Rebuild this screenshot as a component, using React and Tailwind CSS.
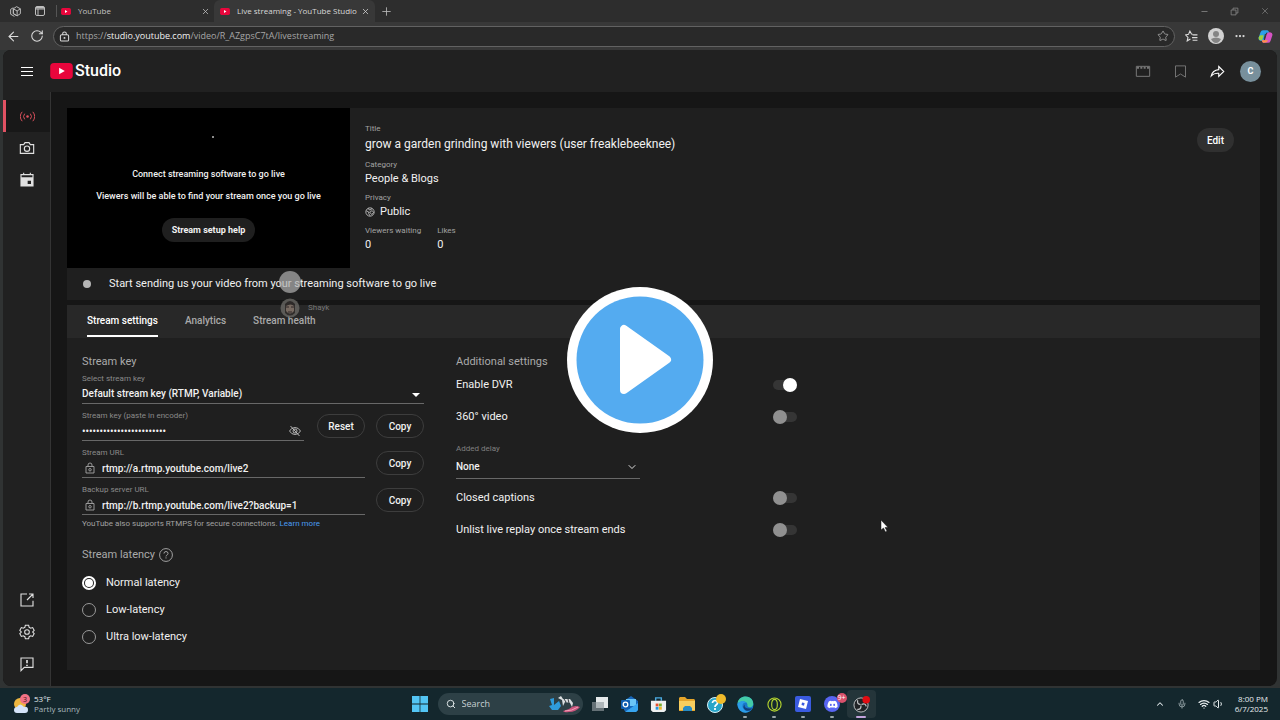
import { useState } from 'react'
import clsx from 'clsx'
import { FaDiscord } from 'react-icons/fa'
import {
  ArrowLeft,
  ChevronDown,
  ChevronUp,
  Ellipsis,
  Mic,
  Minus,
  Plus,
  RotateCw,
  Search,
  Star,
  Volume1,
  Wifi,
  X,
} from 'lucide-react'

function Icon({ children, className = 'size-4', box = 24, width = 1.5 }) {
  return (
    <svg
      viewBox={`0 0 ${box} ${box}`}
      className={className}
      fill="none"
      stroke="currentColor"
      strokeWidth={width}
      aria-hidden="true"
    >
      {children}
    </svg>
  )
}

function YouTubeMark({ className }) {
  return (
    <svg viewBox="0 0 24 17" className={className} aria-hidden="true">
      <rect width="24" height="17" rx="4" fill="#e8063c" />
      <path d="M9.5 5v7l6-3.500z" fill="#fff" />
    </svg>
  )
}

function Tab({ title, active, className }) {
  return (
    <div
      className={clsx(
        'flex h-[22px] items-center rounded-t-md',
        active ? 'bg-[#383838] text-[#d8d8d8]' : 'text-[#c4c4c4]',
        className
      )}
    >
      <YouTubeMark className="h-[7px] w-[10px] shrink-0" />
      <span className="ml-[7px] flex-1 whitespace-nowrap text-[8px]">{title}</span>
      <button aria-label={`Close ${title}`} className="p-1">
        <X className="size-[9px]" strokeWidth={2} />
      </button>
    </div>
  )
}

function BrowserBar() {
  return (
    <div className="font-['Open_Sans','Noto_Sans',sans-serif]">
      <div className="flex h-[22px] items-center bg-[#2d2d2d] text-[#bdbdbd]">
        <button aria-label="Workspaces" className="ml-[9px]">
          <Icon className="size-[13px]" width={1.8}>
            <path d="M8 7l6-4 7 4v9l-6 4M8 7l7 4v9l-7-4zM8 7v9l7 4M15 11l6-4M8 5L3 8v9l7 4" />
          </Icon>
        </button>
        <button aria-label="Tab actions" className="ml-3">
          <Icon className="size-[12px]" width={2}>
            <rect x="3" y="3" width="18" height="18" rx="3" />
            <path d="M3 8h18M8 8v13" />
            <path d="M4 5.500h16" strokeWidth="3" />
          </Icon>
        </button>
        <div className="ml-[10px] h-3 w-px bg-[#555]" />
        <Tab title="YouTube" className="w-[157px] pl-[4px]" />
        <Tab title="Live streaming - YouTube Studio" active className="w-[161px] pl-[6px] pr-[2px]" />
        <button aria-label="New tab" className="ml-[5px]">
          <Plus className="size-[13px]" strokeWidth={1.5} />
        </button>
        <div className="ml-auto flex items-center gap-[21px] pr-[10px] text-[#8d8d8d]">
          <button aria-label="Minimize"><Minus className="size-[9px]" /></button>
          <button aria-label="Restore">
            <Icon className="size-[9px]" width={2}>
              <path d="M3 8h13v13H3zM8 8V3h13v13h-5" />
            </Icon>
          </button>
          <button aria-label="Close window"><X className="size-[10px]" strokeWidth={1.5} /></button>
        </div>
      </div>

      <div className="flex h-7 items-center bg-[#383838] pl-[6px] pr-[7px] text-[#dcdcdc]">
        <button aria-label="Back"><ArrowLeft className="size-[15px]" strokeWidth={1.7} /></button>
        <button aria-label="Refresh" className="ml-[9px]">
          <RotateCw className="size-[14px]" strokeWidth={1.8} />
        </button>
        <div className="ml-[9px] flex h-[21px] flex-1 items-center rounded-full border border-[#626262] bg-[#292929] pl-[5px] pr-[5px]">
          <Icon className="size-[11px]" width={2.2}>
            <rect x="3" y="8" width="18" height="14" rx="3" />
            <path d="M8 8V6a4 4 0 018 0v2" />
            <circle cx="12" cy="15" r="1" />
          </Icon>
          <span className="ml-[6px] flex-1 text-[9px] text-[#a6a6a6]">
            https://<span className="text-[#f0f0f0]">studio.youtube.com</span>/video/R_AZgpsC7tA/livestreaming
          </span>
          <button aria-label="Add to favorites">
            <Star className="size-3 text-[#a8a8a8]" strokeWidth={1.6} />
          </button>
        </div>
        <button aria-label="Favorites" className="ml-[10px]">
          <Icon className="size-[13px]" width={2}>
            <path d="M14 8l-2-.500L9 2 6.500 8 1 9l4.500 4.500L4 20l6-3.500M14 9h9M13 14h10M14 19h9" />
          </Icon>
        </button>
        <button aria-label="Profile" className="ml-[10px]">
          <svg viewBox="0 0 16 16" className="size-4" aria-hidden="true">
            <circle cx="8" cy="8" r="8" fill="#d2d2d2" />
            <circle cx="8" cy="6" r="3" fill="#858585" />
            <path d="M3 11q5-3 10 0-2 4-5 4t-5-4z" fill="#858585" />
          </svg>
        </button>
        <button aria-label="Browser menu" className="ml-[10px]">
          <Ellipsis className="size-3" strokeWidth={2.5} />
        </button>
        <button aria-label="Copilot" className="ml-3">
          <svg viewBox="0 0 24 24" className="size-[15px]" aria-hidden="true">
            <path d="M8 2h7q2 0 3 4H13l-3 10q-1 3-4 3-6 0-5-5L4 5q1-3 4-3z" fill="#2b9fe8" />
            <path d="M1 14q1-4 3-4h5L7 17q-6 3-6-3z" fill="#9dcf3e" />
            <path d="M16 22H9q-2 0-3-4h5l3-10q1-3 4-3 6 0 5 5l-3 9q-1 3-4 3z" fill="#d653c4" />
            <path d="M9 22q-2 0-3-4h10q-1 4-7 4z" fill="#ff9349" />
            <path d="M11 8h2l-2 8h-2z" fill="#383838" />
          </svg>
        </button>
      </div>
    </div>
  )
}

function StudioHeader() {
  return (
    <header className="flex h-[42px] items-center bg-[#212121] pl-[17px] pr-4 text-white">
      <button aria-label="Menu">
        <svg viewBox="0 0 14 11" className="h-[11px] w-[14px] stroke-white" aria-hidden="true">
          <path d="M1 1.500h12M1 5.500h12M1 9.500h12" />
        </svg>
      </button>
      <a href="#" className="ml-4 flex items-center gap-[2px]">
        <YouTubeMark className="h-4 w-[23px]" />
        <span className="text-[16px] font-medium leading-5">Studio</span>
      </a>
      <div className="ml-auto flex items-center">
        <button aria-label="Create highlight" className="text-[#777]">
          <Icon className="size-4" width={1.5}>
            <path d="M2 5h20v15H2z" />
            <path d="M3 7h18" strokeDasharray="3 2" strokeWidth="3" />
          </Icon>
        </button>
        <button aria-label="Insert marker" className="ml-[22px] text-[#777]">
          <Icon className="size-[15px]"><path d="M4 3h16v18l-8-5-8 5z" /></Icon>
        </button>
        <button aria-label="Share" className="ml-[22px]">
          <Icon className="size-[15px]" width={1.8}>
            <path d="M14 4l8 8-8 8v-5Q7 14 2 19 4 10 14 9z" />
          </Icon>
        </button>
        <button
          aria-label="Account"
          className="ml-[15px] size-[21px] rounded-full bg-[#78909c] text-[9px] font-bold leading-none"
        >
          C
        </button>
      </div>
    </header>
  )
}

function SideItem({ label, active, children }) {
  return (
    <a
      href="#"
      aria-label={label}
      className={clsx(
        'flex h-8 items-center justify-center border-l-3 pr-[2px]',
        active ? 'border-[#e05263] bg-[#181818] text-[#e0525e]' : 'border-transparent text-[#e0e0e0]'
      )}
    >
      {children}
    </a>
  )
}

function Sidebar() {
  return (
    <nav className="flex w-12 shrink-0 flex-col border-r border-[#343434] bg-[#212121] pb-[6px] pt-2">
      <SideItem label="Stream" active>
        <Icon className="size-[15px]" width={1.5}>
          <circle cx="12" cy="12" r="2" fill="currentColor" stroke="none" />
          <path d="M7.500 7.500a7 7 0 000 9M16.500 7.500a7 7 0 010 9M3.500 4.500a11 11 0 000 15M20.500 4.500a11 11 0 010 15" />
        </Icon>
      </SideItem>
      <SideItem label="Webcam">
        <Icon className="size-4" width={1.7}>
          <path d="M2 7h5l2-3h6l2 3h5v13H2z" />
          <circle cx="12" cy="13" r="4" />
        </Icon>
      </SideItem>
      <SideItem label="Manage">
        <Icon className="size-4" width={1.7}>
          <path d="M3 4h18v17H3zM7 1v3M17 1v3" />
          <path d="M3 8h18v13H3zM13 13v5h5v-5z" fill="currentColor" fillRule="evenodd" stroke="none" />
        </Icon>
      </SideItem>
      <div className="flex-1" />
      <SideItem label="YouTube Studio">
        <Icon className="size-4" width={1.7}>
          <path d="M12 3H3v18h18v-8M15 3h6v6M21 3l-9 9" />
        </Icon>
      </SideItem>
      <SideItem label="Settings">
        <Icon className="size-4" width={1.6}>
          <path d="M9.500 2h5l.700 3 2.300 1.300 3-.900 2.300 4.200-2.300 2.400 2.300 2.400-2.300 4.200-3-.900-2.300 1.300-.700 3h-5l-.700-3-2.300-1.300-3 .900-2.300-4.200L3.500 12 1.200 9.600l2.300-4.200 3 .900L8.800 5z" />
          <circle cx="12" cy="12" r="3.500" />
        </Icon>
      </SideItem>
      <SideItem label="Send feedback">
        <Icon className="size-4" width={1.7}>
          <path d="M3 3h18v14H8l-5 5z" />
          <path d="M12 6v5M12 13v2" strokeWidth="2.500" />
        </Icon>
      </SideItem>
    </nav>
  )
}

function Detail({ label, children, large }) {
  return (
    <div>
      <dt className="text-[8px] leading-3 text-[#a2a2a2]">{label}</dt>
      <dd className={clsx('flex items-center pt-px text-[#f1f1f1]', large ? 'text-[12px] leading-4' : 'text-[11px] leading-[13px]')}>
        {children}
      </dd>
    </div>
  )
}

function StreamCard() {
  return (
    <section className="bg-[#1f1f1f]">
      <div className="flex">
        <div className="flex h-40 w-[283px] shrink-0 flex-col items-center bg-black text-[9px] font-medium leading-[22px] text-[#f1f1f1]">
          <div className="ml-[9px] mt-7 size-[2px] rounded-full bg-[#bbb]" />
          <p className="mt-[25px]">Connect streaming software to go live</p>
          <p>Viewers will be able to find your stream once you go live</p>
          <button className="mt-[11px] h-6 rounded-full bg-[#1f1f1f] px-[10px] text-[9px] font-bold leading-6">
            Stream setup help
          </button>
        </div>
        <dl className="flex flex-1 flex-col gap-[7px] pl-[15px] pt-[15px]">
          <Detail label="Title" large>grow a garden grinding with viewers (user freaklebeeknee)</Detail>
          <Detail label="Category">People &amp; Blogs</Detail>
          <Detail label="Privacy">
            <Icon className="mr-[5px] size-[10px] text-[#c8c8c8]" width={2}>
              <circle cx="12" cy="12" r="10" />
              <path d="M3 9l6 3v4l3 5M8 3l2 4 5-1 1-3M14 10l-3 2 5 6 5-5-4-4z" />
            </Icon>
            Public
          </Detail>
          <div className="flex gap-4">
            <Detail label="Viewers waiting">0</Detail>
            <Detail label="Likes">0</Detail>
          </div>
        </dl>
        <button className="mr-[26px] mt-5 h-6 rounded-full bg-[#303030] px-[10px] text-[10px] font-medium text-white">
          Edit
        </button>
      </div>
      <div className="flex h-8 items-center pl-4 text-[11px] text-[#f1f1f1]">
        <span className="mr-[18px] size-2 rounded-full bg-[#b5b5b5]" />
        <p className="pt-px">Start sending us your video from your streaming software to go live</p>
      </div>
    </section>
  )
}

function Field({ id, label, children, className }) {
  return (
    <div className={clsx('pt-[6px]', className)}>
      <label htmlFor={id} className="block text-[8px] leading-3 text-[#8a8a8a]">{label}</label>
      <div className="flex h-[19px] items-center border-b border-[#686868] text-[#f1f1f1]">{children}</div>
    </div>
  )
}

function PillButton({ children }) {
  return (
    <button className="mb-[3px] h-6 w-12 shrink-0 rounded-full border border-[#3d3d3d] text-[10px] font-medium text-[#f1f1f1]">
      {children}
    </button>
  )
}

function LockIcon() {
  return (
    <Icon className="ml-[2px] mr-[6px] size-3 shrink-0 text-[#a5a5a5]" width={1.8}>
      <path d="M4 9h16v13H4zM8 9V6a4 4 0 018 0v3" />
      <circle cx="12" cy="15.500" r="2.500" />
    </Icon>
  )
}

function Toggle({ id, label, on }) {
  const [checked, setChecked] = useState(Boolean(on))
  return (
    <div className="flex h-8 items-center justify-between pr-px text-[11px] text-[#f1f1f1]">
      <label htmlFor={id} className="pt-px">{label}</label>
      <input
        id={id}
        type="checkbox"
        checked={checked}
        onChange={(e) => setChecked(e.target.checked)}
        className="flex h-[10px] w-6 appearance-none items-center rounded-full bg-[#353535] before:size-[14px] before:shrink-0 before:rounded-full before:bg-[#909090] checked:justify-end checked:before:bg-white"
      />
    </div>
  )
}

const latencies = ['Normal latency', 'Low-latency', 'Ultra low-latency']

function StreamSettings() {
  const [latency, setLatency] = useState(latencies[0])

  return (
    <div className="flex flex-1 gap-8 bg-[#1f1f1f] px-[15px] pt-4">
      <div className="w-[342px]">
        <h2 className="pt-px text-[11px] leading-[13px] text-[#aaa]">Stream key</h2>
        <Field id="key-select" label="Select stream key" className="-mt-px">
          <div className="relative flex flex-1 items-center">
            <select id="key-select" className="w-full appearance-none bg-transparent text-[10px] font-medium leading-4">
              <option>Default stream key (RTMP, Variable)</option>
            </select>
            <svg viewBox="0 0 8 4" className="pointer-events-none absolute right-1 top-[7px] h-1 w-[8px] fill-white">
              <path d="M0 0h8L4 4z" />
            </svg>
          </div>
        </Field>
        <div className="flex items-end gap-[11px]">
          <Field id="key" label="Stream key (paste in encoder)" className="mr-[2px] flex-1">
            <input
              id="key"
              type="password"
              readOnly
              value="abcdefghijklmnopqrstuvwx"
              className="w-0 flex-1 bg-transparent text-[10px] font-medium outline-none"
            />
            <button aria-label="Show key">
              <Icon className="mr-[3px] size-3 text-[#c4c4c4]" width={1.8}>
                <path d="M1 12Q5 5 12 5t11 7q-4 7-11 7T1 12zM3 2l18 20" />
                <circle cx="12" cy="12" r="4" />
              </Icon>
            </button>
          </Field>
          <PillButton>Reset</PillButton>
          <PillButton>Copy</PillButton>
        </div>
        <div className="flex items-end gap-[11px]">
          <Field id="url" label="Stream URL" className="flex-1">
            <LockIcon />
            <input id="url" readOnly value="rtmp://a.rtmp.youtube.com/live2" className="w-0 flex-1 bg-transparent text-[10px] font-medium outline-none" />
          </Field>
          <PillButton>Copy</PillButton>
        </div>
        <div className="flex items-end gap-[11px]">
          <Field id="backup" label="Backup server URL" className="flex-1">
            <LockIcon />
            <input id="backup" readOnly value="rtmp://b.rtmp.youtube.com/live2?backup=1" className="w-0 flex-1 bg-transparent text-[10px] font-medium outline-none" />
          </Field>
          <PillButton>Copy</PillButton>
        </div>
        <p className="mt-[3px] text-[8px] leading-3 text-[#a2a2a2]">
          YouTube also supports RTMPS for secure connections.{' '}
          <a href="#" className="text-[#4a9cf0]">Learn more</a>
        </p>

        <fieldset className="mt-[17px]">
          <legend className="flex h-4 items-center gap-1 text-[11px] text-[#aaa]">
            Stream latency
            <Icon className="size-[14px]" width={1.6}>
              <circle cx="12" cy="12" r="11" />
              <path d="M8.500 9.500a3.500 3.500 0 117 0c0 2.500-3.500 2.500-3.500 5M12 16v2" />
            </Icon>
          </legend>
          <div className="mt-[6px]">
            {latencies.map((name) => (
              <label key={name} className="flex h-[27px] items-center gap-[10px] text-[11px] text-[#f1f1f1]">
                <input
                  type="radio"
                  name="latency"
                  checked={latency === name}
                  onChange={() => setLatency(name)}
                  className="flex size-[14px] appearance-none items-center justify-center rounded-full border border-[#999] checked:border-2 checked:border-white checked:before:size-[8px] checked:before:rounded-full checked:before:bg-white"
                />
                <span className="pt-[2px]">{name}</span>
              </label>
            ))}
          </div>
        </fieldset>
      </div>

      <div className="w-[342px]">
        <h2 className="mb-px pt-px text-[11px] leading-[13px] text-[#aaa]">Additional settings</h2>
        <Toggle id="dvr" label="Enable DVR" on />
        <Toggle id="v360" label="360° video" />
        <div className="mb-[3px] mt-[10px] w-[184px]">
          <label htmlFor="delay" className="block text-[8px] leading-3 text-[#808080]">Added delay</label>
          <div className="relative flex h-6 items-center border-b border-[#686868] text-[#f1f1f1]">
            <select id="delay" className="w-full appearance-none bg-transparent text-[10px] font-medium">
              <option>None</option>
            </select>
            <ChevronDown className="pointer-events-none absolute right-[2px] size-3" strokeWidth={1.8} />
          </div>
        </div>
        <Toggle id="captions" label="Closed captions" />
        <Toggle id="unlist" label="Unlist live replay once stream ends" />
      </div>
    </div>
  )
}

function SettingsTabs() {
  const [tab, setTab] = useState('Stream settings')
  return (
    <div role="tablist" className="flex h-[33px] gap-[27px] bg-[#282828] pl-5 text-[10px]">
      {['Stream settings', 'Analytics', 'Stream health'].map((name) => (
        <button
          key={name}
          role="tab"
          aria-selected={tab === name}
          onClick={() => setTab(name)}
          className={clsx(
            'h-8 border-b-2 pt-px font-medium',
            tab === name ? 'border-white text-white' : 'border-transparent text-[#aaa]'
          )}
        >
          {name}
        </button>
      ))}
    </div>
  )
}

function TaskButton({ label, open, active, children }) {
  return (
    <button
      aria-label={label}
      className={clsx('relative flex h-7 w-[29px] items-center justify-center rounded', active && 'bg-[#24353a]')}
    >
      {children}
      {open && (
        <span className={clsx('absolute bottom-0 h-[2px] rounded-full', active ? 'w-[10px] bg-[#c3a3dc]' : 'w-1 bg-[#98a5a9]')} />
      )}
    </button>
  )
}

function Taskbar() {
  return (
    <footer className="flex h-8 items-center bg-[#14272d] font-['Open_Sans','Noto_Sans',sans-serif] text-[9px] text-[#e6ecee]">
      <div className="flex flex-1 items-center pl-[13px] leading-[10px]">
        <svg viewBox="0 0 18 20" className="mr-[3px] h-5 w-[18px]" aria-hidden="true">
          <circle cx="7" cy="10" r="6" fill="#eeb640" />
          <path d="M4 19a3 3 0 010-6q3-5 7 0 4-1 4 3 0 3-3 3z" fill="#d5e4fa" />
          <circle cx="12" cy="5" r="5" fill="#f17286" />
          <text x="12" y="8" textAnchor="middle" fontSize="7" fill="#42121a">3</text>
        </svg>
        <div className="text-[8px]">
          <div>53°F</div>
          <div className="text-[#a9b8bc]">Partly sunny</div>
        </div>
      </div>

      <div className="flex items-center">
        <TaskButton label="Start">
          <svg viewBox="0 0 16 16" className="size-4" aria-hidden="true">
            <path d="M0 0h7.600v7.600H0zM8.400 0H16v7.600H8.400zM0 8.400h7.600V16H0zM8.400 8.400H16V16H8.400z" fill="#53c5f4" />
          </svg>
        </TaskButton>
        <label className="mx-[3px] flex h-[22px] w-[145px] items-center rounded-full bg-[#2d4046] pl-2 pr-[2px]">
          <Search className="size-[10px] shrink-0" strokeWidth={2.2} />
          <input
            type="search"
            aria-label="Search"
            placeholder="Search"
            className="ml-[6px] w-0 flex-1 bg-transparent text-[9px] outline-none placeholder:text-[#c7d0d3]"
          />
          <svg viewBox="0 0 34 18" className="h-[18px] w-[34px]" aria-hidden="true">
            <path d="M3 4l4-1v7l5-4 2 5-3 4H5l-3-4 3-1z" fill="#2f9bdb" />
            <path d="M11 3l3-2 2 3h7l3 4-1 4-2-4-5-1-2 4-1-6z" fill="#dce0e2" />
            <path d="M17 4l2 3M21 4l1 4" stroke="#343b40" />
            <path d="M22 14q5-5 11-2-4 5-11 5-5 1-6-1z" fill="#c9547d" />
            <path d="M18 16q7 0 13-4" stroke="#f3a2b8" fill="none" />
          </svg>
        </label>
        <TaskButton label="Task view">
          <svg viewBox="0 0 18 16" className="h-4 w-[18px]" aria-hidden="true">
            <path d="M1 6h12v9H1z" fill="#657176" />
            <path d="M5 1h12v11H5z" fill="#e5e9ea" />
            <path d="M5 6h8v6H5z" fill="#aeb6b9" />
          </svg>
        </TaskButton>
        <TaskButton label="Outlook">
          <svg viewBox="0 0 18 16" className="h-4 w-[18px]" aria-hidden="true">
            <path d="M4 5l7-5 7 5v9l-2 2H6l-2-2z" fill="#1766ba" />
            <path d="M6 3h10v7H6z" fill="#6ac5f7" />
            <path d="M18 7v7l-2 2H5z" fill="#38a5ef" />
            <rect x="1" y="4" width="9" height="9" rx="1" fill="#0f5db0" />
            <circle cx="5.500" cy="8.500" r="2.300" fill="none" stroke="#fff" strokeWidth="1.300" />
          </svg>
        </TaskButton>
        <TaskButton label="Microsoft Store">
          <svg viewBox="0 0 18 18" className="size-[17px]" aria-hidden="true">
            <path d="M6 5V2h6v3" fill="none" stroke="#4aaae0" strokeWidth="1.500" />
            <path d="M1 5h16v10l-2 2H3l-2-2z" fill="#eef0f0" />
            <path d="M6 8h3v3H6z" fill="#e5502e" />
            <path d="M9.500 8h3v3h-3z" fill="#78ae2d" />
            <path d="M6 11.500h3v3H6z" fill="#2498df" />
            <path d="M9.500 11.500h3v3h-3z" fill="#edb52a" />
          </svg>
        </TaskButton>
        <TaskButton label="File Explorer">
          <svg viewBox="0 0 18 16" className="h-4 w-[18px]" aria-hidden="true">
            <path d="M1 2l1-1h5l2 2h7l1 1v11H1z" fill="#e5a52b" />
            <path d="M1 5h16v9H1z" fill="#f7ce5e" />
            <path d="M5 15v-3l2-2h5l2 2v3z" fill="#278bc4" />
          </svg>
        </TaskButton>
        <TaskButton label="Get Help">
          <svg viewBox="0 0 20 20" className="size-5" aria-hidden="true">
            <circle cx="9" cy="11" r="7.500" fill="#29a5c8" stroke="#d8f0f6" />
            <path d="M6.500 9a2.500 2.500 0 115 0c0 2-2.500 1.500-2.500 4M9 14v2" fill="none" stroke="#fff" strokeWidth="1.700" />
            <circle cx="15" cy="5" r="5" fill="#f0bb2b" />
          </svg>
        </TaskButton>
        <TaskButton label="Microsoft Edge" open>
          <svg viewBox="0 0 18 18" className="size-[17px]" aria-hidden="true">
            <circle cx="9" cy="9" r="8.500" fill="#1878ca" />
            <path d="M.500 8C1 3 5 .500 9 .500c6 0 9 5 8 9-1 3-5 3-6 1 1-5-6-6-10.500-2.500z" fill="#43cba7" />
            <path d="M.500 8Q5 3 10 7q-5 0-4 5 2 5 8 4-6 4-11-1Q0 12 .500 8z" fill="#2b9de8" />
            <path d="M8 9q-1 5 8 4-3 4-7 2-4-3-1-6z" fill="#123f7c" />
          </svg>
        </TaskButton>
        <TaskButton label="Opera GX" open>
          <svg viewBox="0 0 16 16" className="size-[15px]" fill="none" stroke="#b5d52f" aria-hidden="true">
            <circle cx="8" cy="8" r="7" strokeWidth="1.200" />
            <ellipse cx="8" cy="8" rx="3" ry="5.500" strokeWidth="1.200" />
          </svg>
        </TaskButton>
        <TaskButton label="Roblox" open>
          <svg viewBox="0 0 16 16" className="size-4" aria-hidden="true">
            <rect width="16" height="16" rx="2" fill="#3a5be0" />
            <path d="M5 3l8 2-2 8-8-2zM7 6.500L6.500 9l2.500.700.600-2.600z" fill="#fff" fillRule="evenodd" />
          </svg>
        </TaskButton>
        <TaskButton label="Discord" open>
          <span className="flex size-4 items-center justify-center rounded-full bg-[#5865f2]">
            <FaDiscord className="size-[11px] text-white" />
          </span>
          <span className="absolute right-0 top-[3px] size-[10px] rounded-full bg-[#d9516c] text-center text-[7px] leading-[10px] text-white">
            9+
          </span>
        </TaskButton>
        <TaskButton label="OBS Studio" open active>
          <svg viewBox="0 0 18 18" className="size-[17px]" aria-hidden="true">
            <circle cx="8.500" cy="9.500" r="7.500" fill="#202326" stroke="#c4c7c9" />
            <path d="M8 9Q4 9 5 4.500M9 9q4-2 5 2M8.500 10q0 5-4 4" fill="none" stroke="#c4c7c9" strokeWidth="1.300" />
            <circle cx="14" cy="4" r="4" fill="#e30c12" />
          </svg>
        </TaskButton>
      </div>

      <div className="flex flex-1 items-center justify-end pr-3">
        <button aria-label="Hidden icons"><ChevronUp className="size-[10px]" strokeWidth={2.5} /></button>
        <Mic className="ml-3 size-[10px] text-[#a0adb1]" />
        <Wifi className="ml-[11px] size-3" strokeWidth={2.5} />
        <Volume1 className="ml-[3px] size-3" />
        <div className="ml-[10px] text-right text-[8px] leading-[10px]">
          <div>8:00 PM</div>
          <div>6/7/2025</div>
        </div>
      </div>
    </footer>
  )
}

// faint viewer avatars from the voice chat overlay
function VoiceOverlay() {
  return (
    <div className="pointer-events-none absolute left-[279px] top-[271px] text-[8px] leading-none text-[#777]">
      <div className="size-[22px] rounded-full bg-[#b0b0b0]/70" />
      <div className="mt-[5px] flex items-center gap-2">
        <svg viewBox="0 0 20 20" className="ml-px size-5 opacity-80" aria-hidden="true">
          <circle cx="10" cy="10" r="9.500" fill="#696864" />
          <path d="M5 6q5-6 10 0v9q-5 5-10 0z" fill="#34302e" />
          <path d="M6 8q5-3 8 0v5q-4 5-8 0z" fill="#8b7b70" />
          <path d="M6 9h3M11 9h3M8 14h4" stroke="#302826" />
        </svg>
        <span>Shayk</span>
      </div>
    </div>
  )
}

export default function App() {
  return (
    <div className="relative flex min-h-screen flex-col bg-[#303333] font-[Roboto,sans-serif]">
      <BrowserBar />
      <div className="mx-[3px] mb-[2px] flex flex-1 flex-col overflow-hidden rounded-lg bg-[#161616]">
        <StudioHeader />
        <div className="flex flex-1">
          <Sidebar />
          <main className="flex flex-1 flex-col pb-4 pl-4 pr-[17px] pt-4">
            <StreamCard />
            <div className="mt-[5px] flex flex-1 flex-col">
              <SettingsTabs />
              <StreamSettings />
            </div>
          </main>
        </div>
      </div>
      <Taskbar />

      <VoiceOverlay />
      <button aria-label="Play video" className="absolute left-1/2 top-1/2 size-[146px] -translate-x-1/2 -translate-y-1/2">
        <svg viewBox="0 0 146 146" aria-hidden="true">
          <circle cx="73" cy="73" r="73" fill="#fff" />
          <circle cx="73" cy="73" r="63.500" fill="#54abf0" />
          <path d="M57 42v61l43-30.500z" fill="#fff" stroke="#fff" strokeWidth="8" strokeLinejoin="round" />
        </svg>
      </button>
      <svg viewBox="0 0 9 14" className="pointer-events-none absolute left-[880px] top-[519px] h-[14px] w-[9px]" aria-hidden="true">
        <path d="M1 1v10l2.500-2 2 4 1.500-1-2-3.500h3z" fill="#fff" stroke="#111" strokeWidth=".5" />
      </svg>
    </div>
  )
}
